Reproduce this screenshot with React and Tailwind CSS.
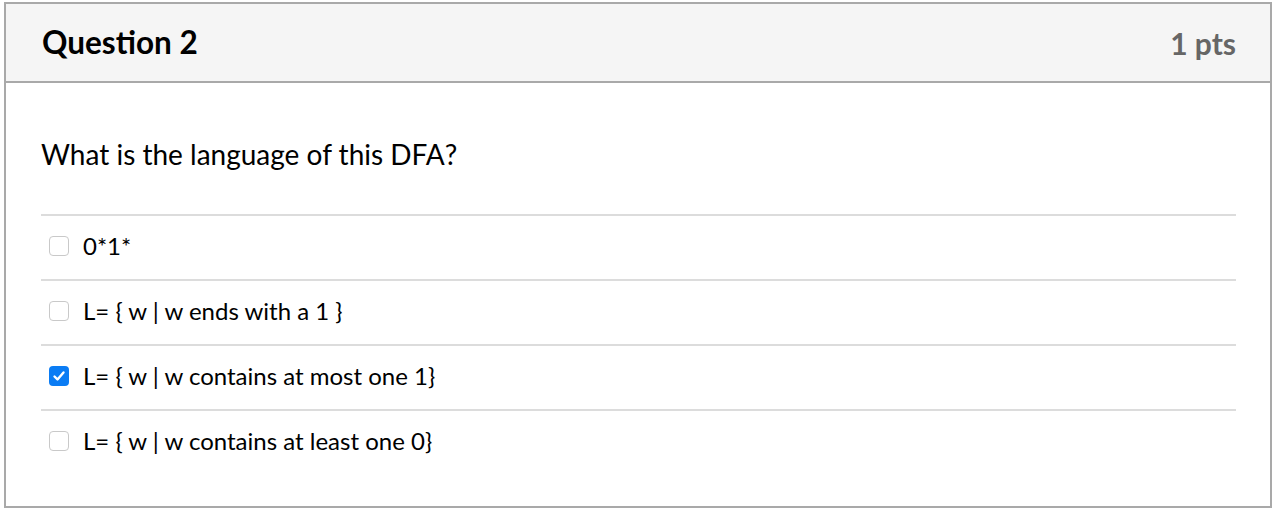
import React from 'react'

const answers = [
  { text: '0*1*', checked: false },
  { text: 'L= { w | w ends with a 1 }', checked: false },
  { text: 'L= { w | w contains at most one 1}', checked: true },
  { text: 'L= { w | w contains at least one 0}', checked: false },
]

function Box({ checked }) {
  if (checked) {
    return (
      <span className="flex h-[20px] w-[20px] shrink-0 items-center justify-center rounded-[4px] bg-[#0a7cf4]">
        <svg width="14" height="14" viewBox="0 0 14 14" fill="none">
          <path d="M2.5 7.5l3 3 6-7" stroke="white" strokeWidth="2.4" strokeLinecap="round" strokeLinejoin="round" />
        </svg>
      </span>
    )
  }
  return <span className="block h-[20px] w-[20px] shrink-0 rounded-[4px] border border-[#c9c9c9] bg-white" />
}

export default function App() {
  return (
    <div className="min-h-[530px] bg-white pl-[4px] pt-[2px] font-['Lato','Liberation_Sans',sans-serif] text-[#1a1a1a]">
      <div className="h-[506px] w-[1268px] border-2 border-[#a9a9a9]">
        <div className="flex h-[79px] items-center justify-between border-b-2 border-[#a9a9a9] bg-[#f5f5f5] pl-[36px] pr-[34px]">
          <h2 className="text-[31.5px] font-bold leading-none text-black">Question 2</h2>
          <span className="text-[30px] font-bold leading-none text-[#666]">1 pts</span>
        </div>
        <div className="pl-[35px] pr-[34px]">
          <p className="h-[131px] pt-[54px] text-[28px] leading-[34px] text-black">What is the language of this DFA?</p>
          {answers.map((a, i) => (
            <div key={i} className="flex h-[65px] items-center border-t-2 border-[#dcdcdc] pb-[3px] pl-[8px]">
              <Box checked={a.checked} />
              <span className="ml-[14px] text-[24px] leading-[30px] text-black">{a.text}</span>
            </div>
          ))}
        </div>
      </div>
    </div>
  )
}
